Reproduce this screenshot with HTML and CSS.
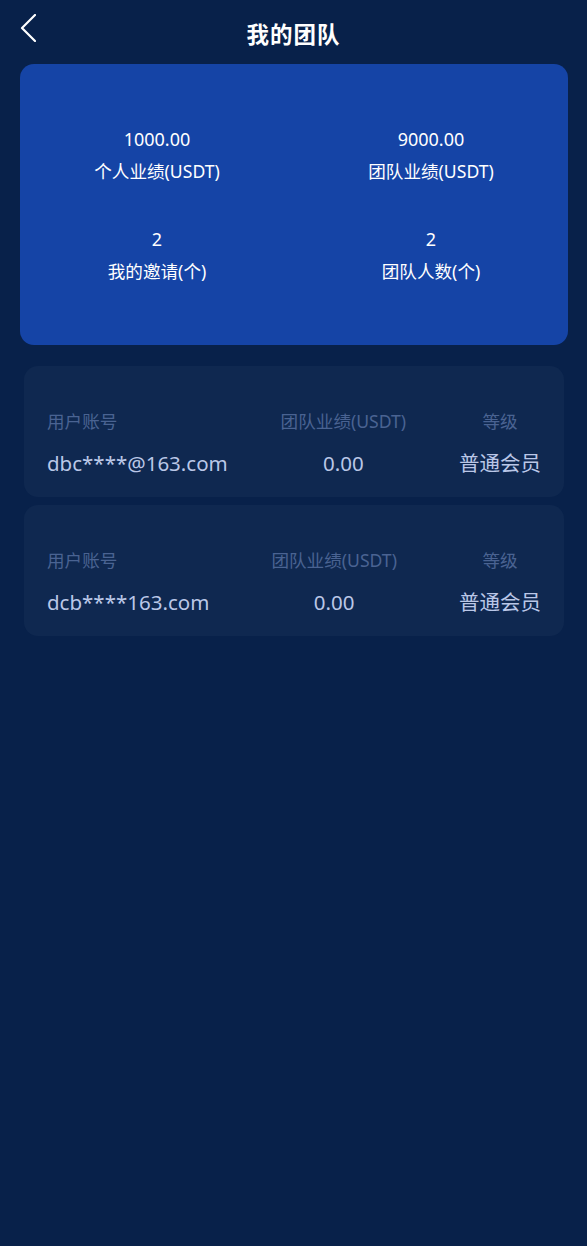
FILE: index.html
```html
<!DOCTYPE html>
<html lang="zh-CN">
<head>
<meta charset="utf-8">
<title>我的团队</title>
<link rel="stylesheet" href="styles.css">
</head>
<body>
<div class="page">
  <header class="header">
    <svg class="back" width="16" height="28" viewBox="0 0 16 28"><path d="M15 1 L2 14 L15 27" fill="none" stroke="#ffffff" stroke-width="2.2" stroke-linecap="round" stroke-linejoin="round"/></svg>
    <h1 class="title">我的团队</h1>
  </header>

  <section class="summary">
    <div class="stat"><div class="num">1000.00</div><div class="lbl">个人业绩(USDT)</div></div>
    <div class="stat"><div class="num">9000.00</div><div class="lbl">团队业绩(USDT)</div></div>
    <div class="stat"><div class="num">2</div><div class="lbl">我的邀请(个)</div></div>
    <div class="stat"><div class="num">2</div><div class="lbl">团队人数(个)</div></div>
  </section>

  <section class="list">
    <div class="member">
      <div class="col col-left"><div class="k">用户账号</div><div class="v">dbc****@163.com</div></div>
      <div class="col"><div class="k">团队业绩(USDT)</div><div class="v">0.00</div></div>
      <div class="col"><div class="k">等级</div><div class="v">普通会员</div></div>
    </div>
    <div class="member">
      <div class="col col-left"><div class="k">用户账号</div><div class="v">dcb****163.com</div></div>
      <div class="col"><div class="k">团队业绩(USDT)</div><div class="v">0.00</div></div>
      <div class="col"><div class="k">等级</div><div class="v">普通会员</div></div>
    </div>
  </section>
</div>
</body>
</html>
```

FILE: styles.css
```css
html, body {
  margin: 0;
  padding: 0;
  background: #08214a;
  min-height: 100%;
}
body {
  font-family: "Noto Sans", "Noto Sans CJK SC", sans-serif;
  color: #ffffff;
}
.page {
  width: 587px;
  min-height: 1246px;
  background: #08214a;
}
.header {
  position: relative;
  height: 64px;
  display: flex;
  align-items: flex-start;
  justify-content: center;
}
.back {
  position: absolute;
  left: 20px;
  top: 14px;
}
.title {
  margin: 0;
  padding-top: 17px;
  font-size: 22.5px;
  line-height: 32px;
  font-weight: 700;
  font-family: "Noto Sans CJK SC", sans-serif;
  letter-spacing: 1px;
}
.summary {
  margin: 0 19px 0 20px;
  background: #1544a6;
  border-radius: 14px;
  padding: 59px 0 58px;
  display: grid;
  grid-template-columns: 1fr 1fr;
  row-gap: 36px;
  text-align: center;
}
.num {
  font-size: 18px;
  line-height: 32px;
}
.lbl {
  font-size: 17.6px;
  line-height: 32px;
}
.list {
  margin: 21px 23px 0 24px;
  display: flex;
  flex-direction: column;
  gap: 8px;
}
.member {
  background: #0f2850;
  border-radius: 14px;
  padding: 41px 23px 19px;
  display: flex;
  justify-content: space-between;
}
.col {
  display: flex;
  flex-direction: column;
  align-items: center;
  gap: 13px;
}
.col-left {
  align-items: flex-start;
}
.k {
  font-size: 17.6px;
  line-height: 28px;
  color: #4a6392;
}
.v {
  font-size: 20.5px;
  line-height: 30px;
  color: #bac7e7;
}
```
